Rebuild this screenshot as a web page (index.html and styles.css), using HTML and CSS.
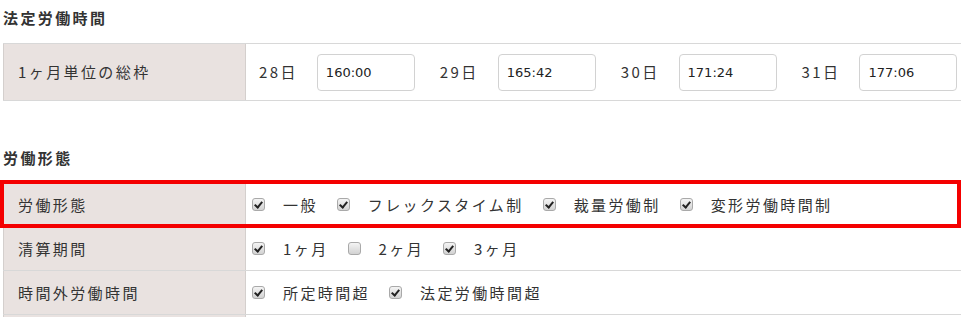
FILE: index.html
```html
<!DOCTYPE html>
<html>

<head>
    <meta charset="utf-8">
    <link rel="stylesheet" href="styles.css">
</head>

<body>
    <div class="page">

        <h3 class="section-title">法定労働時間</h3>
        <div class="form-table">
            <div class="row">
                <div class="label">1ヶ月単位の総枠</div>
                <div class="value value-times">
                    <span class="day">28日</span>
                    <input type="text" class="time" value="160:00">
                    <span class="day">29日</span>
                    <input type="text" class="time" value="165:42">
                    <span class="day">30日</span>
                    <input type="text" class="time" value="171:24">
                    <span class="day">31日</span>
                    <input type="text" class="time" value="177:06">
                </div>
            </div>
        </div>

        <h3 class="section-title second">労働形態</h3>
        <div class="form-table">
            <div class="row highlight">
                <div class="label">労働形態</div>
                <div class="value">
                    <label class="opt"><span class="check on"></span>一般</label>
                    <label class="opt"><span class="check on"></span>フレックスタイム制</label>
                    <label class="opt"><span class="check on"></span>裁量労働制</label>
                    <label class="opt"><span class="check on"></span>変形労働時間制</label>
                </div>
            </div>
            <div class="row">
                <div class="label">清算期間</div>
                <div class="value">
                    <label class="opt"><span class="check on"></span>1ヶ月</label>
                    <label class="opt"><span class="check"></span>2ヶ月</label>
                    <label class="opt"><span class="check on"></span>3ヶ月</label>
                </div>
            </div>
            <div class="row">
                <div class="label">時間外労働時間</div>
                <div class="value">
                    <label class="opt"><span class="check on"></span>所定時間超</label>
                    <label class="opt"><span class="check on"></span>法定労働時間超</label>
                </div>
            </div>
            <div class="row">
                <div class="label"></div>
                <div class="value"></div>
            </div>
        </div>

    </div>
</body>

</html>
```

FILE: styles.css
```css
* {
    box-sizing: border-box;
}

body {
    margin: 0;
    background: #fff;
    color: #333;
    font-family: "Noto Sans CJK JP", "Noto Sans", sans-serif;
    font-size: 15px;
    letter-spacing: 2.4px;
}

.page {
    padding: 7px 0 0 3px;
}

.section-title {
    margin: 0 0 14px 0;
    font-size: 15px;
    line-height: 22px;
    font-weight: bold;
}

.section-title.second {
    margin-top: 46px;
    margin-bottom: 13px;
}

.form-table {
    border-top: 1px solid #d8d8d8;
}

.row {
    display: flex;
    border-bottom: 1px solid #d8d8d8;
    min-height: 44px;
}

.form-table:first-of-type .row {
    min-height: 57px;
}

.label {
    flex: 0 0 243px;
    display: flex;
    align-items: center;
    padding-left: 14px;
    background-color: #e9e2e0;
    border-left: 1px solid #d4cfcd;
    border-right: 1px solid #d4cfcd;
    line-height: 22px;
    white-space: nowrap;
}

.value {
    flex: 1;
    display: flex;
    align-items: center;
    padding-left: 6px;
    line-height: 22px;
    white-space: nowrap;
    overflow: hidden;
}

.value-times {
    padding-left: 13px;
}

.day {
    flex-shrink: 0;
    margin-right: 19px;
}

.time {
    flex-shrink: 0;
    width: 98px;
    height: 37px;
    margin: 0 25px 0 0;
    padding: 0 8px;
    border: 1px solid #d2d2d2;
    border-radius: 4px;
    background: #fff;
    color: #222;
    font-family: "DejaVu Sans", sans-serif;
    font-size: 13px;
    letter-spacing: 0;
}

.opt {
    flex-shrink: 0;
    display: inline-flex;
    align-items: center;
    margin-right: 19px;
}

/* checkbox drawn by hand, so it looks like the old mac one */
.check {
    position: relative;
    flex-shrink: 0;
    width: 13px;
    height: 13px;
    margin-right: 18px;
    border: 1px solid #a9a9a9;
    border-radius: 3px;
    background: linear-gradient(#f4f4f4, #d2d2d2);
}

.check.on::after {
    content: "";
    position: absolute;
    left: 3px;
    top: 1px;
    width: 3px;
    height: 6px;
    border-right: 2px solid #222;
    border-bottom: 2px solid #222;
    transform: rotate(40deg);
}

/* red frame drawn on top of the first row */
.highlight {
    position: relative;
}

.highlight::after {
    content: "";
    position: absolute;
    left: -3px;
    right: 0;
    top: -3px;
    bottom: -2px;
    border: 4px solid #f40000;
    pointer-events: none;
}
```
